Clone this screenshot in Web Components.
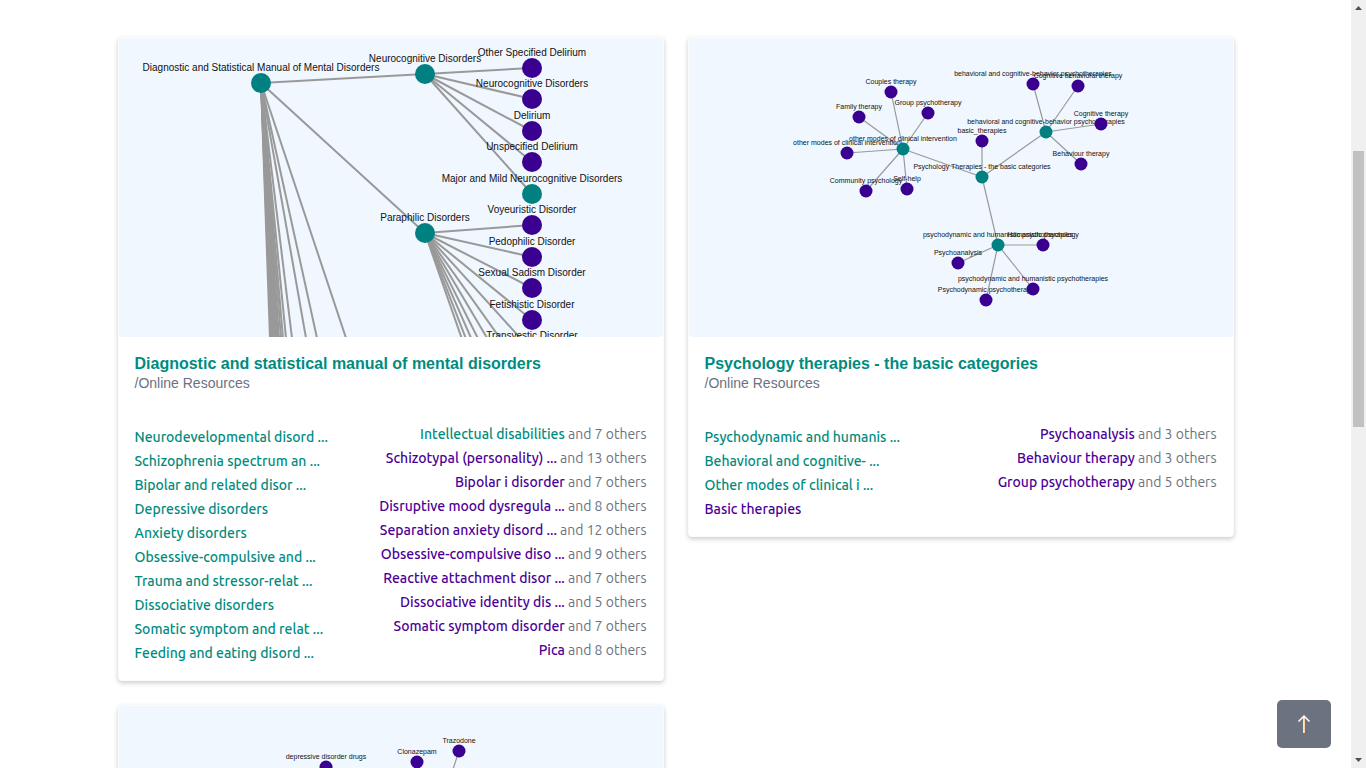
<!DOCTYPE html>
<html lang="en">
<head>
<meta charset="utf-8">
<title>Online Resources</title>
<style>
html, body { margin: 0; height: 100%; overflow: hidden; background: #fff; }
body { font-family: "Liberation Sans", Arial, sans-serif; }
</style>
</head>
<body>
<resource-page></resource-page>
<script>
const TEAL = '#008080', PURPLE = '#3a0090';

/* Node: [x, y, label, colour key]; edge: [x1, y1, x2, y2]. */
const GRAPHS = {
  dsm: {
    radius: 10, size: 10, lift: 12, stroke: 2,
    nodes: [
      [142, 45, 'Diagnostic and Statistical Manual of Mental Disorders', 't'],
      [306, 36, 'Neurocognitive Disorders', 't'],
      [306, 195, 'Paraphilic Disorders', 't'],
      [413, 30, 'Other Specified Delirium'],
      [413, 61, 'Neurocognitive Disorders'],
      [413, 93, 'Delirium'],
      [413, 124, 'Unspecified Delirium'],
      [413, 156, 'Major and Mild Neurocognitive Disorders', 't'],
      [413, 187, 'Voyeuristic Disorder'],
      [413, 219, 'Pedophilic Disorder'],
      [413, 250, 'Sexual Sadism Disorder'],
      [413, 282, 'Fetishistic Disorder'],
      [413, 313, 'Transvestic Disorder']
    ],
    edges: [
      [142, 45, 306, 36], [142, 45, 306, 195],
      ...[30, 61, 93, 124, 156].map(y => [306, 36, 413, y]),
      ...[187, 219, 250, 282, 313, 345, 376, 408, 439, 471, 502].map(y => [306, 195, 413, y]),
      ...[151, 152, 153, 154, 155, 156, 157, 158, 159, 160, 162, 164, 167, 173, 187, 198, 227].map(x => [142, 45, x, 300])
    ]
  },
  therapies: {
    radius: 6.5, size: 7, lift: 8, stroke: 1.2,
    nodes: [
      [293, 139, 'Psychology Therapies - the basic categories', 't'],
      [214, 111, 'other modes of clinical intervention', 't'],
      [357, 94, 'behavioral and cognitive-behavior psychotherapies', 't'],
      [309, 207, 'psychodynamic and humanistic psychotherapies', 't'],
      [202, 54, 'Couples therapy'], [239, 75, 'Group psychotherapy'],
      [170, 79, 'Family therapy'], [158, 115, 'other modes of clinical intervention'],
      [177, 153, 'Community psychology'], [218, 151, 'Self-help'],
      [293, 103, 'basic_therapies'],
      [344, 46, 'behavioral and cognitive-behavior psychotherapies'],
      [389, 48, 'Cognitive behavioral therapy'], [412, 86, 'Cognitive therapy'],
      [392, 126, 'Behaviour therapy'],
      [354, 207, 'Humanistic psychology'], [269, 225, 'Psychoanalysis'],
      [297, 262, 'Psychodynamic psychotherapy'],
      [344, 251, 'psychodynamic and humanistic psychotherapies']
    ],
    edges: [
      [293, 139, 214, 111], [293, 139, 357, 94], [293, 139, 309, 207], [293, 139, 293, 103],
      ...[[202, 54], [239, 75], [170, 79], [158, 115], [177, 153], [218, 151]].map(p => [214, 111, ...p]),
      ...[[344, 46], [389, 48], [412, 86], [392, 126]].map(p => [357, 94, ...p]),
      ...[[354, 207], [269, 225], [297, 262], [344, 251]].map(p => [309, 207, ...p])
    ]
  },
  drugs: {
    radius: 6.5, size: 7, lift: 8, stroke: 1.2,
    nodes: [[207, 61, 'depressive disorder drugs'], [298, 56, 'Clonazepam'], [340, 45, 'Trazodone']],
    edges: [[340, 45, 316, 118]]
  }
};

/* Link: [text, colour key, how many others]. */
const CARDS = [
  { title: 'Diagnostic and statistical manual of mental disorders', graph: 'dsm',
    left: [['Neurodevelopmental disord ...', 't'], ['Schizophrenia spectrum an ...', 't'], ['Bipolar and related disor ...', 't'],
      ['Depressive disorders', 't'], ['Anxiety disorders', 't'], ['Obsessive-compulsive and ...', 't'], ['Trauma and stressor-relat ...', 't'],
      ['Dissociative disorders', 't'], ['Somatic symptom and relat ...', 't'], ['Feeding and eating disord ...', 't']],
    right: [['Intellectual disabilities', 't', 7], ['Schizotypal (personality) ...', 'p', 13], ['Bipolar i disorder', 'p', 7],
      ['Disruptive mood dysregula ...', 'p', 8], ['Separation anxiety disord ...', 'p', 12], ['Obsessive-compulsive diso ...', 'p', 9],
      ['Reactive attachment disor ...', 'p', 7], ['Dissociative identity dis ...', 'p', 5], ['Somatic symptom disorder', 'p', 7], ['Pica', 'p', 8]] },
  { title: 'Psychology therapies - the basic categories', graph: 'therapies',
    left: [['Psychodynamic and humanis ...', 't'], ['Behavioral and cognitive- ...', 't'], ['Other modes of clinical i ...', 't'], ['Basic therapies', 'p']],
    right: [['Psychoanalysis', 'p', 3], ['Behaviour therapy', 'p', 3], ['Group psychotherapy', 'p', 5]] },
  { graph: 'drugs', left: [], right: [] }
];

class GraphPreview extends HTMLElement {
  connectedCallback() {
    const g = GRAPHS[this.getAttribute('name')];
    const lines = g.edges.map(([a, b, c, d]) => `<line x1="${a}" y1="${b}" x2="${c}" y2="${d}"/>`).join('');
    const labels = g.nodes.map(([x, y, t]) => `<text x="${x}" y="${y - g.lift}">${t}</text>`).join('');
    const dots = g.nodes.map(([x, y, , k]) => `<circle cx="${x}" cy="${y}" r="${g.radius}" fill="${k === 't' ? TEAL : PURPLE}"/>`).join('');
    this.attachShadow({ mode: 'open' }).innerHTML = `
      <style>
        :host { display: block; }
        svg { display: block; width: 100%; height: auto; background: #f0f7ff; border-radius: 3px; overflow: hidden; }
        line { stroke: #999; stroke-width: ${g.stroke}; }
        text { font: ${g.size}px "Liberation Sans", Arial, sans-serif; text-anchor: middle; fill: #111; }
      </style>
      <svg viewBox="0 0 544 299" role="img">${lines}${labels}${dots}</svg>`;
  }
}
customElements.define('graph-preview', GraphPreview);

class TopicLink extends HTMLElement {
  connectedCallback() {
    const purple = this.getAttribute('tone') === 'p';
    const n = this.getAttribute('others');
    this.attachShadow({ mode: 'open' }).innerHTML = `
      <style>
        :host { display: block; font: 14px/24px Ubuntu, "Noto Sans", sans-serif; color: #6b7280; white-space: nowrap; }
        a { color: ${purple ? '#4b0096' : '#008b80'}; font-weight: 500; text-decoration: none; }
      </style>
      <a href="#"><slot></slot></a>${n ? ` and ${n} others` : ''}`;
  }
}
customElements.define('topic-link', TopicLink);

class ResourceCard extends HTMLElement {
  connectedCallback() {
    const body = `
      <div class="body">
        <h2><a href="#"><slot name="title"></slot></a></h2>
        <p>/Online Resources</p>
        <div class="topics">
          <div class="left"><slot name="left"></slot></div>
          <div class="right"><slot name="right"></slot></div>
        </div>
      </div>`;
    this.attachShadow({ mode: 'open' }).innerHTML = `
      <style>
        :host { display: block; box-sizing: border-box; min-width: 0; border: 1px solid #fbfbfb; border-radius: 4px;
          background: #fff; box-shadow: 0 2px 5px rgba(0, 0, 0, .2); }
        .body { padding: 16px 16px 15px; }
        h2 { margin: 0; font-size: 16px; line-height: 22px; }
        h2 a { color: #008b80; text-decoration: none; }
        p { margin: 0 0 31px; font-size: 14px; line-height: 16px; color: #6b7280; }
        .topics { display: flex; justify-content: space-between; }
        .left { padding-top: 3px; }
        .right { text-align: right; }
      </style>
      <slot name="preview"></slot>
      ${this.hasAttribute('preview-only') ? '' : body}`;
  }
}
customElements.define('resource-card', ResourceCard);

class BackToTop extends HTMLElement {
  constructor() {
    super();
    this.attachShadow({ mode: 'open' }).innerHTML = `
      <style>
        :host { display: block; }
        button { display: grid; place-items: center; width: 54px; height: 48px; padding: 0; border: 0; border-radius: 5px; background: #6c727f; }
        svg { display: block; }
      </style>
      <button type="button" aria-label="Back to top">
        <svg width="14" height="20" viewBox="0 0 14 20" fill="none" stroke="#fff">
          <path d="M6.500 2v17" stroke="#dcebff"/><path d="M7.500 2v17" stroke="#ffd79a"/>
          <path d="M1.500 7.500 7 2l5.500 5.500" stroke-width="1.500"/>
        </svg>
      </button>`;
  }
}
customElements.define('back-to-top', BackToTop);

class ScrollTrack extends HTMLElement {
  constructor() {
    super();
    this.attachShadow({ mode: 'open' }).innerHTML = `
      <style>
        :host { display: grid; grid-template-rows: 17px 134fr 276fr 324fr 17px; background: #f0f0f0; }
        svg { display: block; width: 15px; height: 17px; }
        .thumb { grid-row: 3; margin: 0 2px; background: #c1c1c1; }
        .down { grid-row: 5; }
      </style>
      <svg viewBox="0 0 15 17"><path d="M4 10h7L7.500 6z" fill="#505050"/></svg>
      <div class="thumb"></div>
      <svg class="down" viewBox="0 0 15 17"><path d="M4 7h7l-3.500 4z" fill="#505050"/></svg>`;
  }
}
customElements.define('scroll-track', ScrollTrack);

class ResourcePage extends HTMLElement {
  connectedCallback() {
    const topics = (list, slot) => list.map(([t, k, n]) =>
      `<topic-link slot="${slot}" tone="${k}"${n ? ` others="${n}"` : ''}>${t}</topic-link>`).join('');
    this.attachShadow({ mode: 'open' }).innerHTML = `
      <style>
        :host { display: grid; grid-template-columns: 1fr 15px; height: 100vh; }
        main { position: relative; overflow: hidden; }
        .grid { display: grid; grid-template-columns: 1fr 1fr; align-items: start; gap: 24px;
          max-width: 1116px; margin: 0 auto; padding: 37px 12px; }
        back-to-top { position: absolute; right: 20px; bottom: 20px; }
      </style>
      <main>
        <div class="grid">${CARDS.map(c => `
          <resource-card${c.title ? '' : ' preview-only'}>
            <graph-preview slot="preview" name="${c.graph}"></graph-preview>
            ${c.title ? `<span slot="title">${c.title}</span>` : ''}
            ${topics(c.left, 'left')}${topics(c.right, 'right')}
          </resource-card>`).join('')}
        </div>
        <back-to-top></back-to-top>
      </main>
      <scroll-track></scroll-track>`;
  }
}
customElements.define('resource-page', ResourcePage);
</script>
</body>
</html>
